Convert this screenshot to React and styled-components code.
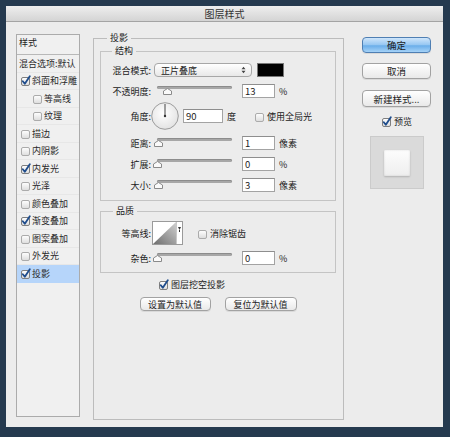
import React from 'react';
import styled, { createGlobalStyle } from 'styled-components';

const GlobalStyle = createGlobalStyle`
  html, body {
    margin: 0;
    padding: 0;
    background: #253a4f;
  }
  body {
    font-family: "Noto Sans CJK SC", "Noto Sans", sans-serif;
    color: #222;
  }
`;

const Dialog = styled.div`
  margin: 6px 0 0 6px;
  width: 437px;
  height: 421px;
  background: #ececec;
  display: flex;
  flex-direction: column;
`;

const TitleBar = styled.div`
  height: 16px;
  box-sizing: border-box;
  background: linear-gradient(#eeeeee, #d4d4d4);
  border-bottom: 1px solid #a4a4a4;
  text-align: center;
  font-size: 10px;
  line-height: 16px;
  color: #333;
`;

const Body = styled.div`
  display: flex;
  align-items: flex-start;
  padding: 12px 0 0 10px;
`;

/* ---------- left style list ---------- */

const StyleList = styled.div`
  width: 64px;
  height: 383px;
  box-sizing: border-box;
  border: 1px solid #ababab;
  background: #f0f0f0;
  margin-right: 13px;
`;

const ListHeader = styled.div`
  height: 20px;
  box-sizing: border-box;
  border-bottom: 1px solid #b8b8b8;
  font-size: 9px;
  line-height: 16px;
  padding-left: 2px;
`;

const ListItem = styled.div`
  height: 17.5px;
  box-sizing: border-box;
  border-bottom: 1px solid ${({ active }) => (active ? '#b6d5fa' : '#e7e7e7')};
  display: flex;
  align-items: center;
  font-size: 9px;
  white-space: nowrap;
  color: #2a2a2a;
  padding-left: ${({ indent, plain }) => (plain ? 2 : indent ? 15 : 3)}px;
  background: ${({ active }) => (active ? '#b6d5fa' : 'transparent')};
  gap: 1px;
`;

/* ---------- checkbox ---------- */

const CheckWrap = styled.span`
  display: inline-flex;
  width: 11px;
  height: 11px;
  flex: none;
`;

const Checkbox = ({ checked }) => (
  <CheckWrap>
    <svg width="11" height="11" viewBox="0 0 11 11">
      <defs>
        <linearGradient id="cbg" x1="0" y1="0" x2="0" y2="1">
          <stop offset="0" stopColor="#ffffff" />
          <stop offset="1" stopColor="#dcdcdc" />
        </linearGradient>
      </defs>
      <rect x="1.5" y="2.5" width="8" height="8" rx="1.5" fill="url(#cbg)" stroke={checked ? '#7f7f7f' : '#ababab'} />
      {checked && (
        <path d="M2.8 6.2 L4.8 8.8 L9.8 1.2" fill="none" stroke="#1e4c8c" strokeWidth="1.8" strokeLinecap="round" strokeLinejoin="round" />
      )}
    </svg>
  </CheckWrap>
);

/* ---------- group boxes ---------- */

const Group = styled.div`
  position: relative;
  box-sizing: border-box;
  border: 1px solid ${({ outer }) => (outer ? '#bcbcbc' : '#c4c4c4')};
  width: ${({ w }) => w}px;
  ${({ h }) => (h ? `height: ${h}px;` : '')}
  margin-top: ${({ mt }) => mt || 0}px;
  padding: ${({ pad }) => pad};
`;

const Legend = styled.span`
  position: absolute;
  top: -7px;
  left: ${({ left }) => left}px;
  padding: 0 3px;
  background: #ececec;
  font-size: 9px;
  line-height: 12px;
`;

const MainGroup = styled(Group)`
  margin-top: 4px;
  margin-right: 18px;
`;

const Rows = styled.div`
  display: flex;
  flex-direction: column;
  gap: ${({ gap }) => gap}px;
`;

const Row = styled.div`
  display: flex;
  align-items: center;
  height: ${({ h }) => h || 14}px;
  margin: ${({ m }) => m || 0};
  font-size: 9px;
  white-space: nowrap;
`;

const Label = styled.span`
  width: 47px;
  text-align: right;
  flex: none;
`;

const Select = styled.div`
  margin-left: 3px;
  width: 98px;
  height: 14px;
  box-sizing: border-box;
  border: 1px solid #a7a7a7;
  border-radius: 4px;
  background: linear-gradient(#ffffff, #e8e8e8);
  display: flex;
  align-items: center;
  justify-content: space-between;
  padding: 0 5px 0 6px;
`;

const Swatch = styled.div`
  margin-left: 5px;
  width: 27px;
  height: 14px;
  box-sizing: border-box;
  border: 1px solid #777;
  background: #000;
`;

const SliderBox = styled.div`
  position: relative;
  width: 83px;
  height: 14px;
  margin-left: 2px;
  flex: none;
`;

const Track = styled.div`
  position: absolute;
  left: 4px;
  right: 4px;
  top: 2px;
  height: 3px;
  border-radius: 2px;
  background: #a7a7a7;
  box-shadow: inset 0 1px 0 #8c8c8c;
`;

const Thumb = styled.svg`
  position: absolute;
  top: 4px;
`;

const Slider = ({ pct }) => (
  <SliderBox>
    <Track />
    <Thumb width="9" height="7" viewBox="0 0 9 7" style={{ left: `${pct * 0.75}px` }}>
      <path d="M0.5 3 L4.5 0.5 L8.5 3 L8.5 6.5 L0.5 6.5 Z" fill="#fafafa" stroke="#8a8a8a" />
    </Thumb>
  </SliderBox>
);

const Input = styled.div`
  margin-left: ${({ ml }) => (ml === undefined ? 6 : ml)}px;
  width: ${({ w }) => w || 33}px;
  height: 14px;
  box-sizing: border-box;
  border: 1px solid #a3a3a3;
  border-top-color: #8e8e8e;
  background: #fff;
  font-size: 9.5px;
  line-height: 12px;
  padding-left: 2px;
  flex: none;
`;

const Unit = styled.span`
  margin-left: ${({ ml }) => ml || 4}px;
`;

const CheckLabel = styled.span`
  display: inline-flex;
  align-items: center;
  gap: 2px;
  margin-left: ${({ ml }) => ml || 0}px;
  margin-top: ${({ mt }) => mt || 0}px;
  font-size: 9px;
`;

const Dial = () => (
  <svg width="28" height="28" viewBox="0 0 28 28">
    <defs>
      <radialGradient id="dialg" cx="0.45" cy="0.4" r="0.6">
        <stop offset="0" stopColor="#ffffff" />
        <stop offset="1" stopColor="#e3e3e3" />
      </radialGradient>
    </defs>
    <circle cx="14" cy="14" r="13.3" fill="url(#dialg)" stroke="#9c9c9c" />
    <line x1="14" y1="14" x2="14" y2="2" stroke="#444" strokeWidth="1" />
    <circle cx="14" cy="14" r="1.2" fill="#333" />
  </svg>
);

const ContourSvg = styled.svg`
  margin-left: 1px;
  flex: none;
`;

const Contour = () => (
  <ContourSvg width="31" height="24" viewBox="0 0 31 24">
    <defs>
      <linearGradient id="contg" x1="0" y1="1" x2="1" y2="0">
        <stop offset="0" stopColor="#6e6e6e" />
        <stop offset="1" stopColor="#d0d0d0" />
      </linearGradient>
    </defs>
    <rect x="0.5" y="0.5" width="30" height="23" fill="#fff" stroke="#9a9a9a" />
    <path d="M1 23 L24 1 L24 23 Z" fill="url(#contg)" />
    <line x1="24.5" y1="1" x2="24.5" y2="23" stroke="#c8c8c8" />
    <path d="M26 6 L29 6 L27.5 9 Z" fill="#333" />
    <rect x="27" y="9" width="1" height="2" fill="#333" />
  </ContourSvg>
);

const SelectArrows = () => (
  <svg width="5" height="8" viewBox="0 0 5 8">
    <path d="M0.5 3.2 L2.5 0.8 L4.5 3.2 Z M0.5 4.8 L2.5 7.2 L4.5 4.8 Z" fill="#444" />
  </svg>
);

const BottomCheck = styled.div`
  display: flex;
  align-items: center;
  height: 12px;
  margin: 5px 0 0 58px;
`;

const ButtonRow = styled.div`
  display: flex;
  justify-content: center;
  gap: 14px;
  margin-top: 7px;
`;

const Button = styled.div`
  width: ${({ w }) => w}px;
  height: ${({ h }) => h || 14}px;
  margin-top: ${({ mt }) => mt || 0}px;
  box-sizing: border-box;
  border: 1px solid ${({ primary }) => (primary ? '#4f7fb3' : '#a2a2a2')};
  border-radius: 4px;
  background: ${({ primary }) =>
    primary
      ? 'linear-gradient(#cfe6fb 0%, #95c6f2 50%, #6aaeea 55%, #a5d2f7 100%)'
      : 'linear-gradient(#ffffff, #e9e9e9)'};
  box-shadow: 0 1px 0 rgba(0, 0, 0, 0.08);
  font-size: ${({ fs }) => fs || 9}px;
  display: flex;
  align-items: center;
  justify-content: center;
  white-space: nowrap;
  color: #1c1c1c;
`;

/* ---------- right side ---------- */

const Side = styled.div`
  width: 69px;
  display: flex;
  flex-direction: column;
  align-items: center;
  margin-top: 3px;
`;

const PreviewBox = styled.div`
  margin-top: 8px;
  width: 54px;
  height: 53px;
  box-sizing: border-box;
  border: 1px solid #cbcbcb;
  background: #dadada;
  display: flex;
  align-items: center;
  justify-content: center;
`;

const PreviewSquare = styled.div`
  width: 26px;
  height: 26px;
  background: linear-gradient(#fdfdfd, #eeeeee);
  box-shadow: inset 0 0 2px rgba(0, 0, 0, 0.15), 0 1px 2px rgba(0, 0, 0, 0.18);
  border-radius: 1px;
`;

const items = [
  { name: '斜面和浮雕', checked: true },
  { name: '等高线', indent: true },
  { name: '纹理', indent: true },
  { name: '描边' },
  { name: '内阴影' },
  { name: '内发光', checked: true },
  { name: '光泽' },
  { name: '颜色叠加' },
  { name: '渐变叠加', checked: true },
  { name: '图案叠加' },
  { name: '外发光' },
  { name: '投影', checked: true, active: true },
];

const SliderRow = ({ label, pct, value, unit }) => (
  <Row>
    <Label>{label}</Label>
    <Slider pct={pct} />
    <Input>{value}</Input>
    <Unit>{unit}</Unit>
  </Row>
);

export default function App() {
  return (
    <>
      <GlobalStyle />
      <Dialog>
        <TitleBar>图层样式</TitleBar>
        <Body>
          <StyleList>
            <ListHeader>样式</ListHeader>
            <ListItem plain>混合选项:默认</ListItem>
            {items.map((it) => (
              <ListItem key={it.name} indent={it.indent} active={it.active}>
                <Checkbox checked={it.checked} />
                {it.name}
              </ListItem>
            ))}
          </StyleList>

          <MainGroup outer w={251} h={382} pad="12px 7px 0 6px">
            <Legend left={13}>投影</Legend>

            <Group w={236} pad="11px 0 8px 3px">
              <Legend left={11}>结构</Legend>
              <Rows gap={7}>
                <Row>
                  <Label>混合模式:</Label>
                  <Select>
                    <span>正片叠底</span>
                    <SelectArrows />
                  </Select>
                  <Swatch />
                </Row>
                <SliderRow label="不透明度:" pct={13} value="13" unit="%" />
                <Row h={28} m="-3px 0 -1px 0">
                  <Label>角度:</Label>
                  <Dial />
                  <Input ml={4} w={40}>90</Input>
                  <Unit>度</Unit>
                  <CheckLabel ml={18}>
                    <Checkbox />
                    使用全局光
                  </CheckLabel>
                </Row>
                <SliderRow label="距离:" pct={1} value="1" unit="像素" />
                <SliderRow label="扩展:" pct={0} value="0" unit="%" />
                <SliderRow label="大小:" pct={1} value="3" unit="像素" />
              </Rows>
            </Group>

            <Group w={236} mt={10} pad="9px 0 7px 3px">
              <Legend left={12}>品质</Legend>
              <Rows gap={6}>
                <Row h={24}>
                  <Label>等高线:</Label>
                  <Contour />
                  <CheckLabel ml={14}>
                    <Checkbox />
                    消除锯齿
                  </CheckLabel>
                </Row>
                <SliderRow label="杂色:" pct={0} value="0" unit="%" />
              </Rows>
            </Group>

            <BottomCheck>
              <CheckLabel>
                <Checkbox checked />
                图层挖空投影
              </CheckLabel>
            </BottomCheck>
            <ButtonRow>
              <Button w={71}>设置为默认值</Button>
              <Button w={72}>复位为默认值</Button>
            </ButtonRow>
          </MainGroup>

          <Side>
            <Button primary w={69} h={16} fs={9.5}>确定</Button>
            <Button w={69} h={16} fs={9.5} mt={10}>取消</Button>
            <Button w={69} h={17} fs={9.5} mt={11}>新建样式...</Button>
            <CheckLabel mt={8}>
              <Checkbox checked />
              预览
            </CheckLabel>
            <PreviewBox>
              <PreviewSquare />
            </PreviewBox>
          </Side>
        </Body>
      </Dialog>
    </>
  );
}
